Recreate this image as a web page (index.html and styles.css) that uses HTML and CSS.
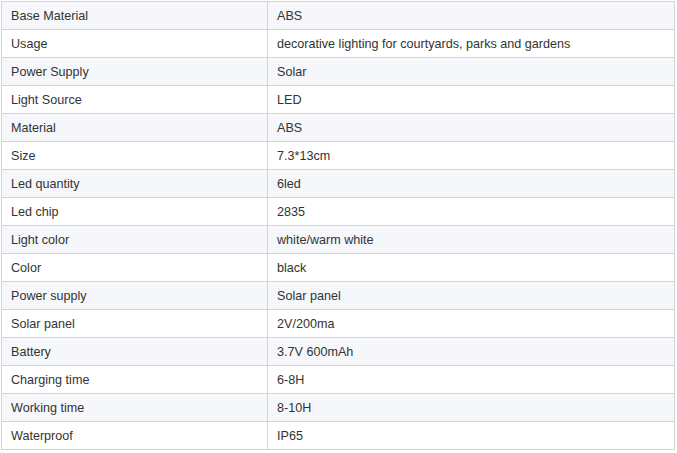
FILE: index.html
```html
<!DOCTYPE html>
<html>
<head>
<meta charset="utf-8">
<link rel="stylesheet" href="styles.css">
</head>
<body>
<table class="spec">
<tbody>
<tr><td class="k">Base Material</td><td>ABS</td></tr>
<tr><td class="k">Usage</td><td>decorative lighting for courtyards, parks and gardens</td></tr>
<tr><td class="k">Power Supply</td><td>Solar</td></tr>
<tr><td class="k">Light Source</td><td>LED</td></tr>
<tr><td class="k">Material</td><td>ABS</td></tr>
<tr><td class="k">Size</td><td>7.3*13cm</td></tr>
<tr><td class="k">Led quantity</td><td>6led</td></tr>
<tr><td class="k">Led chip</td><td>2835</td></tr>
<tr><td class="k">Light color</td><td>white/warm white</td></tr>
<tr><td class="k">Color</td><td>black</td></tr>
<tr><td class="k">Power supply</td><td>Solar panel</td></tr>
<tr><td class="k">Solar panel</td><td>2V/200ma</td></tr>
<tr><td class="k">Battery</td><td>3.7V 600mAh</td></tr>
<tr><td class="k">Charging time</td><td>6-8H</td></tr>
<tr><td class="k">Working time</td><td>8-10H</td></tr>
<tr><td class="k">Waterproof</td><td>IP65</td></tr>
</tbody>
</table>
</body>
</html>
```
FILE: styles.css
```css
html, body {
  margin: 0;
  background: #fff;
}
body {
  padding: 1px;
  font-family: "Liberation Sans", Arial, sans-serif;
  font-size: 12.6px;
  color: #333;
}
.spec {
  border-collapse: collapse;
  width: 674px;
  table-layout: fixed;
}
.spec td {
  border: 1px solid #d4d4d4;
  height: 28px;
  padding: 0 9px;
  box-sizing: border-box;
  vertical-align: middle;
  line-height: 16px;
  white-space: nowrap;
}
.spec td.k {
  width: 266px;
}
.spec tr:nth-child(odd) td {
  background: #f5f7fa;
}
```
